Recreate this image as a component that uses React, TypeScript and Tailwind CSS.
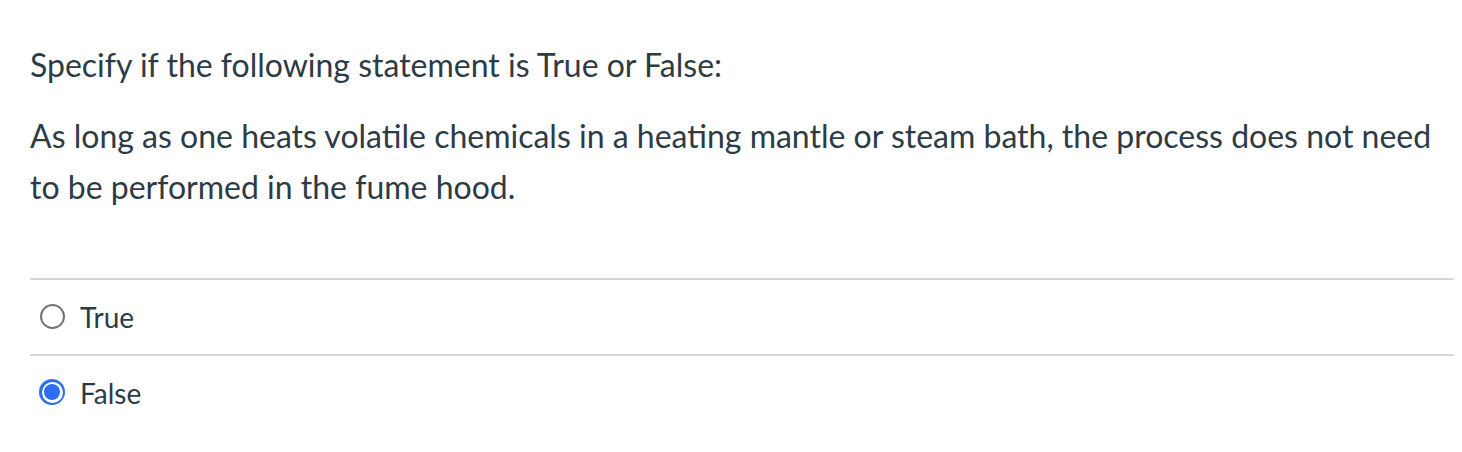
import React from "react";

export default function App() {
  return (
    <div className="w-[1462px] h-[452px] bg-white text-[#2d3b45]" style={{ fontFamily: "Lato, 'Noto Sans', sans-serif" }}>
      <div className="pl-[30px] pr-[8px] pt-[43px]">
        <p className="text-[32px] leading-[44px]">Specify if the following statement is True or False:</p>
        <p className="mt-[23px] text-[32px] leading-[51px]">
          As long as one heats volatile chemicals in a heating mantle or steam bath, the process does not need to be performed in the fume hood.
        </p>
        <div className="mt-[66px]">
          <div className="border-t-2 border-[#d7d7d7] h-[76px] flex items-center">
            <span className="w-[25px] h-[25px] rounded-full border-2 border-[#737373] ml-[10px] mt-[-2px]" />
            <span className="ml-[15px] text-[28px] text-[#2d3b45]">True</span>
          </div>
          <div className="border-t-2 border-[#d7d7d7] h-[76px] flex items-center">
            <span className="w-[26px] h-[26px] rounded-full bg-[#2b6ff0] ml-[9px] mt-[-2px] flex items-center justify-center">
              <span className="w-[21px] h-[21px] rounded-full bg-white flex items-center justify-center">
                <span className="w-[16px] h-[16px] rounded-full bg-[#2b6ff0]" />
              </span>
            </span>
            <span className="ml-[15px] text-[28px] text-[#2d3b45]">False</span>
          </div>
        </div>
      </div>
    </div>
  );
}
